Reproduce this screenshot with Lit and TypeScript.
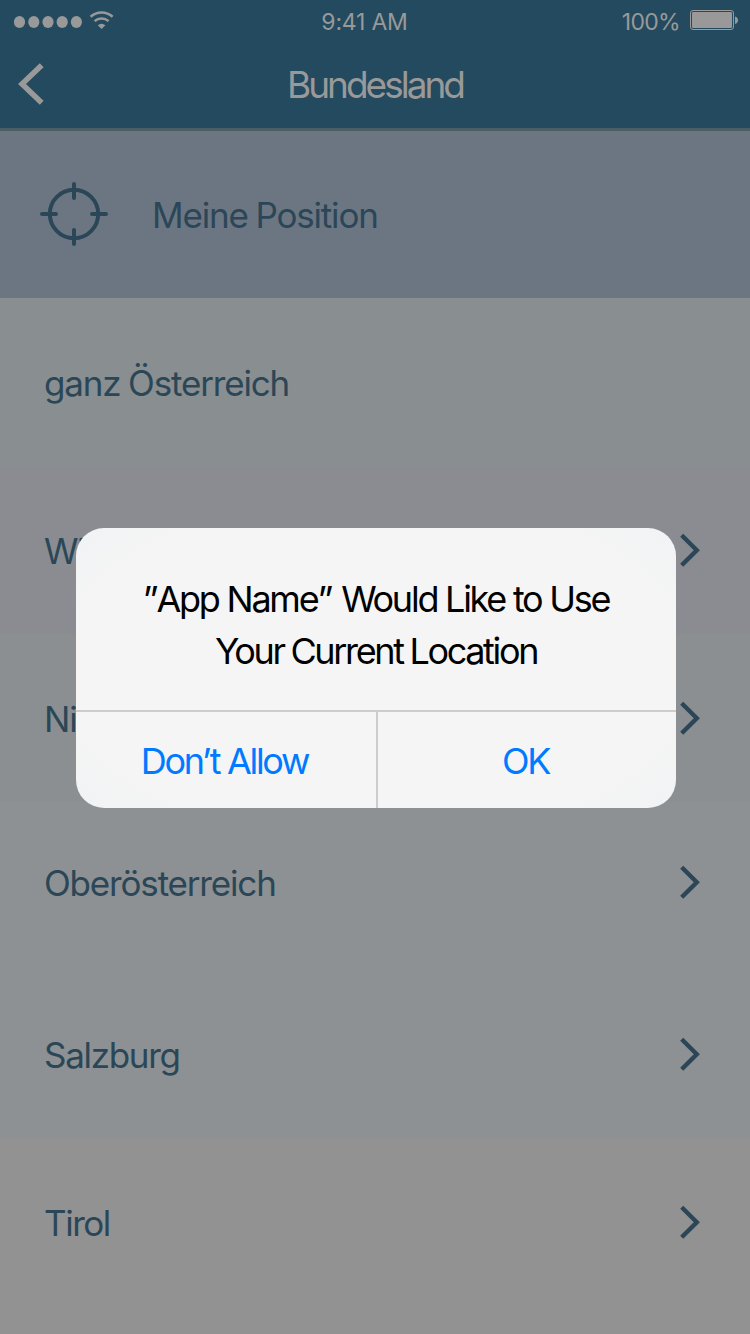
import { LitElement, html, css, svg } from 'lit';
import { customElement } from 'lit/decorators.js';

interface Region {
  name: string;
  cls: string;
  chevron: boolean;
}

const REGIONS: Region[] = [
  { name: 'ganz Österreich', cls: 'r1', chevron: false },
  { name: 'Wien', cls: 'r2', chevron: true },
  { name: 'Niederösterreich', cls: 'r3', chevron: true },
  { name: 'Oberösterreich', cls: 'r4', chevron: true },
  { name: 'Salzburg', cls: 'r5', chevron: true },
  { name: 'Tirol', cls: 'r6', chevron: true },
];

@customElement('app-root')
export class AppRoot extends LitElement {
  static styles = css`
    :host {
      display: block;
      position: relative;
      width: 750px;
      height: 1334px;
      overflow: hidden;
      background: #929293;
      font-family: Inter, "Liberation Sans", sans-serif;
      color: #2b4757;
    }
    svg { display: block; flex: none; }
    .header {
      box-sizing: border-box;
      height: 131px;
      background: #244a5f;
      border-bottom: 3px solid #4d5d65;
      color: #999;
    }
    .status {
      display: grid;
      grid-template-columns: 1fr auto 1fr;
      align-items: center;
      height: 40px;
      padding: 0 12px 0 14px;
    }
    .clock, .percent { font-size: 23px; line-height: 36px; padding-top: 4px; }
    .clock { letter-spacing: -0.2px; margin-right: 23px; }
    .percent { letter-spacing: -0.7px; }
    .power { display: flex; justify-content: flex-end; align-items: center; gap: 10px; }
    .nav {
      display: grid;
      grid-template-columns: 100px 1fr 100px;
      align-items: center;
      height: 88px;
    }
    .back { margin-left: 16px; }
    .heading {
      text-align: center;
      font-size: 37px;
      line-height: 86px;
      letter-spacing: -3px;
      padding: 2px 0 0 0;
    }
    .locate {
      box-sizing: border-box;
      display: flex;
      align-items: center;
      height: 167px;
      padding: 0 0 1px 38px;
      background: #6b7682;
    }
    .locate .label { margin-left: 42px; padding-top: 1px; }
    .label {
      font-size: 35px;
      line-height: 48px;
      letter-spacing: -1.17px;
      word-spacing: -1px;
      white-space: nowrap;
    }
    .row {
      box-sizing: border-box;
      display: flex;
      align-items: center;
      justify-content: space-between;
      height: 168px;
      padding: 0 48px 0 44px;
    }
    .row .label { padding-top: 1px; }
    .r1 { background: #898e91; }
    .r2 { background: #8a8c91; }
    .r3 { background: #8b8f91; }
    .r4 { background: #8d9193; padding-bottom: 8px; }
    .r5 { background: #8d9193; }
    .r5 .label { letter-spacing: -1.3px; }
    .r6 { background: #929293; }
    .r6 .label { letter-spacing: -1.45px; }
    .dialog {
      position: absolute;
      left: 76px;
      top: 528px;
      width: 600px;
      height: 280px;
      display: flex;
      flex-direction: column;
      border-radius: 28px;
      overflow: hidden;
      background: radial-gradient(ellipse 340px 190px at center, #f5f5f5 90%, #eff2f4 120%);
      color: #000;
    }
    .message {
      height: 182px;
      box-sizing: border-box;
      flex: none;
      padding-top: 45px;
      text-align: center;
      font-size: 36px;
      line-height: 52px;
    }
    .first { letter-spacing: -2.25px; }
    .second { letter-spacing: -2.35px; word-spacing: -1px; }
    .open { letter-spacing: -2px; }
    .close { letter-spacing: 0; }
    .actions {
      flex: 1;
      display: grid;
      grid-template-columns: 300px 2px 1fr;
      border-top: 2px solid #ccc;
      color: #007aff;
    }
    .divider { background: #ccc; }
    .action {
      text-align: center;
      font-size: 36px;
      line-height: 94px;
      padding: 2px 3px 0 0;
      letter-spacing: -2.3px;
    }
  `;

  private chevron() {
    return html`<svg width="24" height="36" viewBox="0 0 24 36">
      <path d="M3.7 3.2 L18.8 18.2 L3.7 33.2" fill="none" stroke="#2b4757" stroke-width="4.4"/>
    </svg>`;
  }

  render() {
    return html`
      <header class="header">
        <div class="status">
          <svg width="102" height="40" viewBox="14 0 102 40" fill="#999">
            ${[19.5, 33.8, 48, 62.2, 76.4].map((x) => svg`<ellipse cx=${x} cy="22" rx="5.6" ry="6"/>`)}
            <path d="M90.6 16.8 A16.4 16.4 0 0 1 112.6 16.8 M94.6 21.2 A10.3 10.3 0 0 1 108.6 21.2"
              fill="none" stroke="#999" stroke-width="2.5"/>
            <path d="M101.6 29 L97.8 25.2 A5.4 5.4 0 0 1 105.4 25.2 Z"/>
          </svg>
          <div class="clock">9:41 AM</div>
          <div class="power">
            <div class="percent">100%</div>
            <svg width="48" height="40" viewBox="690 0 48 40">
              <rect x="690.5" y="10.5" width="43" height="19" rx="2.5" fill="none" stroke="#999"/>
              <rect x="692" y="12" width="40" height="16" rx="1" fill="#999"/>
              <path d="M735 16.5 Q738 17.5 738 20.2 Q738 23 735 24 Z" fill="#999"/>
            </svg>
          </div>
        </div>
        <div class="nav">
          <svg class="back" width="30" height="46" viewBox="16 61 30 46">
            <path d="M41.7 65.2 L22 84 L41.7 102.8" fill="none" stroke="#999" stroke-width="5.5"/>
          </svg>
          <div class="heading">Bundesland</div>
        </div>
      </header>
      <div class="locate">
        <svg width="72" height="68" viewBox="38 180 72 68" fill="none" stroke="#2b4757" stroke-width="4" stroke-linecap="round">
          <circle cx="74" cy="214" r="24.2"/>
          <path d="M42 214H56 M92 214H106 M74 184V198 M74 230V244"/>
        </svg>
        <div class="label">Meine Position</div>
      </div>
      ${REGIONS.map(
        (r) => html`<div class="row ${r.cls}">
          <div class="label">${r.name}</div>
          ${r.chevron ? this.chevron() : null}
        </div>`,
      )}
      <section class="dialog">
        <div class="message">
          <div class="first"><span class="open">”</span>App Name<span class="close">”</span> Would Like to Use</div>
          <div class="second">Your Current Location</div>
        </div>
        <div class="actions">
          <div class="action">Don’t Allow</div>
          <div class="divider"></div>
          <div class="action">OK</div>
        </div>
      </section>
    `;
  }
}
